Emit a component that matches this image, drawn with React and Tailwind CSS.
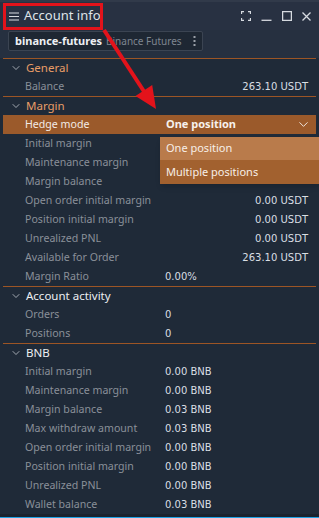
import { ChevronDown } from "lucide-react";

const usdt = [
  ["Initial margin", ""],
  ["Maintenance margin", ""],
  ["Margin balance", ""],
  ["Open order initial margin", "0.00 USDT"],
  ["Position initial margin", "0.00 USDT"],
  ["Unrealized PNL", "0.00 USDT"],
  ["Available for Order", "263.10 USDT"],
];

const bnb = [
  ["Initial margin", "0.00 BNB"],
  ["Maintenance margin", "0.00 BNB"],
  ["Margin balance", "0.03 BNB"],
  ["Max withdraw amount", "0.03 BNB"],
  ["Open order initial margin", "0.00 BNB"],
  ["Position initial margin", "0.00 BNB"],
  ["Unrealized PNL", "0.00 BNB"],
  ["Wallet balance", "0.03 BNB"],
];

function SectionHead({ title, active }) {
  return (
    <div className="h-[19px] flex items-center border-t border-[#9c5525]">
      <ChevronDown size={12} strokeWidth={1.4} className="ml-[7px] mr-[4px] text-[#d8dde3]" />
      <span className={`text-[11.5px] ${active ? "text-[#e89d67]" : "text-[#eceff2]"}`}>
        {title}
      </span>
    </div>
  );
}

function Row({ label, value, right }) {
  return (
    <div className="h-[19px] flex items-center">
      <span className="w-[162px] pl-[22px] text-[10.6px] text-[#8a9099] whitespace-nowrap">
        {label}
      </span>
      <span
        className={`flex-1 font-['DejaVu_Sans'] text-[10px] text-[#d9dee4] whitespace-nowrap ${
          right ? "text-right pr-[8px]" : ""
        }`}
      >
        {value}
      </span>
    </div>
  );
}

export default function App() {
  return (
    <div className="w-[319px] h-[518px] relative overflow-hidden bg-[#1f2a38] font-['Noto_Sans',sans-serif] flex flex-col">
      {/* header */}
      <div className="h-[30px] bg-[#283142] border-t-2 border-[#313a4a] flex items-center shrink-0">
        <svg className="ml-[9px]" width="10" height="9" viewBox="0 0 10 9" stroke="#d6dae0" strokeWidth="1.2">
          <path d="M0 1H10M0 4.5H10M0 8H10" />
        </svg>
        <span className="ml-[5px] text-[13px] text-[#dfe3e8]">Account info</span>
        <div className="ml-auto mr-[8px] flex items-center gap-[10px]">
          <svg width="10" height="10" viewBox="0 0 10 10" fill="none" stroke="#d6dae0" strokeWidth="1.3">
            <path d="M3 0.5H0.5V3M7 0.5H9.5V3M0.5 7V9.5H3M9.5 7V9.5H7" />
          </svg>
          <svg width="11" height="10" viewBox="0 0 11 10" fill="none" stroke="#d6dae0" strokeWidth="1.3">
            <path d="M0.5 9.3H10.5" />
          </svg>
          <svg width="10" height="10" viewBox="0 0 10 10" fill="none" stroke="#d6dae0" strokeWidth="1.3">
            <rect x="0.6" y="0.6" width="8.8" height="8.8" />
          </svg>
          <svg width="9" height="9" viewBox="0 0 9 9" fill="none" stroke="#d6dae0" strokeWidth="1.3">
            <path d="M0.5 0.5L8.5 8.5M8.5 0.5L0.5 8.5" />
          </svg>
        </div>
      </div>

      {/* exchange selector */}
      <div className="px-[8px] pt-[1px] pb-[7px] bg-[#263040]">
        <div className="w-[195px] h-[20px] bg-[#1e2733] border border-[#3b4452] rounded-[2px] flex items-center px-[6px]">
          <span className="text-[11px] font-bold text-[#eef0f3]">binance-futures</span>
          <span className="ml-[4px] text-[10px] text-[#7f8690]">Binance Futures</span>
          <svg className="ml-auto" width="3" height="10" viewBox="0 0 3 10" fill="#9aa0a8">
            <rect x="0.5" y="0" width="2" height="2" />
            <rect x="0.5" y="4" width="2" height="2" />
            <rect x="0.5" y="8" width="2" height="2" />
          </svg>
        </div>
      </div>

      {/* body */}
      <div className="mx-[3px] flex-1 flex flex-col">
        <SectionHead title="General" active />
        <Row label="Balance" value="263.10 USDT" right />

        <SectionHead title="Margin" active />
        <div className="h-[19px] flex items-center bg-[#9b5a2b] relative">
          <span className="w-[157px] pl-[22px] text-[10.6px] text-[#f3ece6]">Hedge mode</span>
          <span className="flex-1 pl-[6px] text-[11px] font-bold text-[#f7f1ec]">One position</span>
          <ChevronDown size={15} strokeWidth={1.5} className="mr-[5px] text-[#f3ece6]" />
          <div className="absolute left-[157px] top-[22px] w-[159px] flex flex-col shadow-md z-10">
            <div className="h-[23px] bg-[#b97b4b] flex items-center pl-[6px] text-[11px] text-[#f7efe8]">
              One position
            </div>
            <div className="h-[24px] bg-[#a2612f] flex items-center pl-[6px] text-[11px] text-[#f7efe8]">
              Multiple positions
            </div>
          </div>
        </div>
        {usdt.map(([l, v]) => (
          <Row key={l} label={l} value={v} right />
        ))}
        <Row label="Margin Ratio" value="0.00%" />

        <SectionHead title="Account activity" />
        <Row label="Orders" value="0" />
        <Row label="Positions" value="0" />

        <SectionHead title="BNB" />
        {bnb.map(([l, v]) => (
          <Row key={l} label={l} value={v} />
        ))}
      </div>
      <div className="h-[3px] bg-[#1a222e] shrink-0" />
      <div className="h-[3px] bg-[#1ea2e4] shrink-0" />

      {/* annotation overlay */}
      <div className="absolute left-[3px] top-[3px] w-[100px] h-[27px] border-[3px] border-[#e3131b]" />
      <svg className="absolute left-0 top-0 pointer-events-none" width="319" height="518">
        <line x1="104" y1="30" x2="145" y2="93" stroke="#e3131b" strokeWidth="4" />
        <polygon points="156,109 135.5,96.1 152.2,85.1" fill="#e3131b" />
      </svg>
    </div>
  );
}
